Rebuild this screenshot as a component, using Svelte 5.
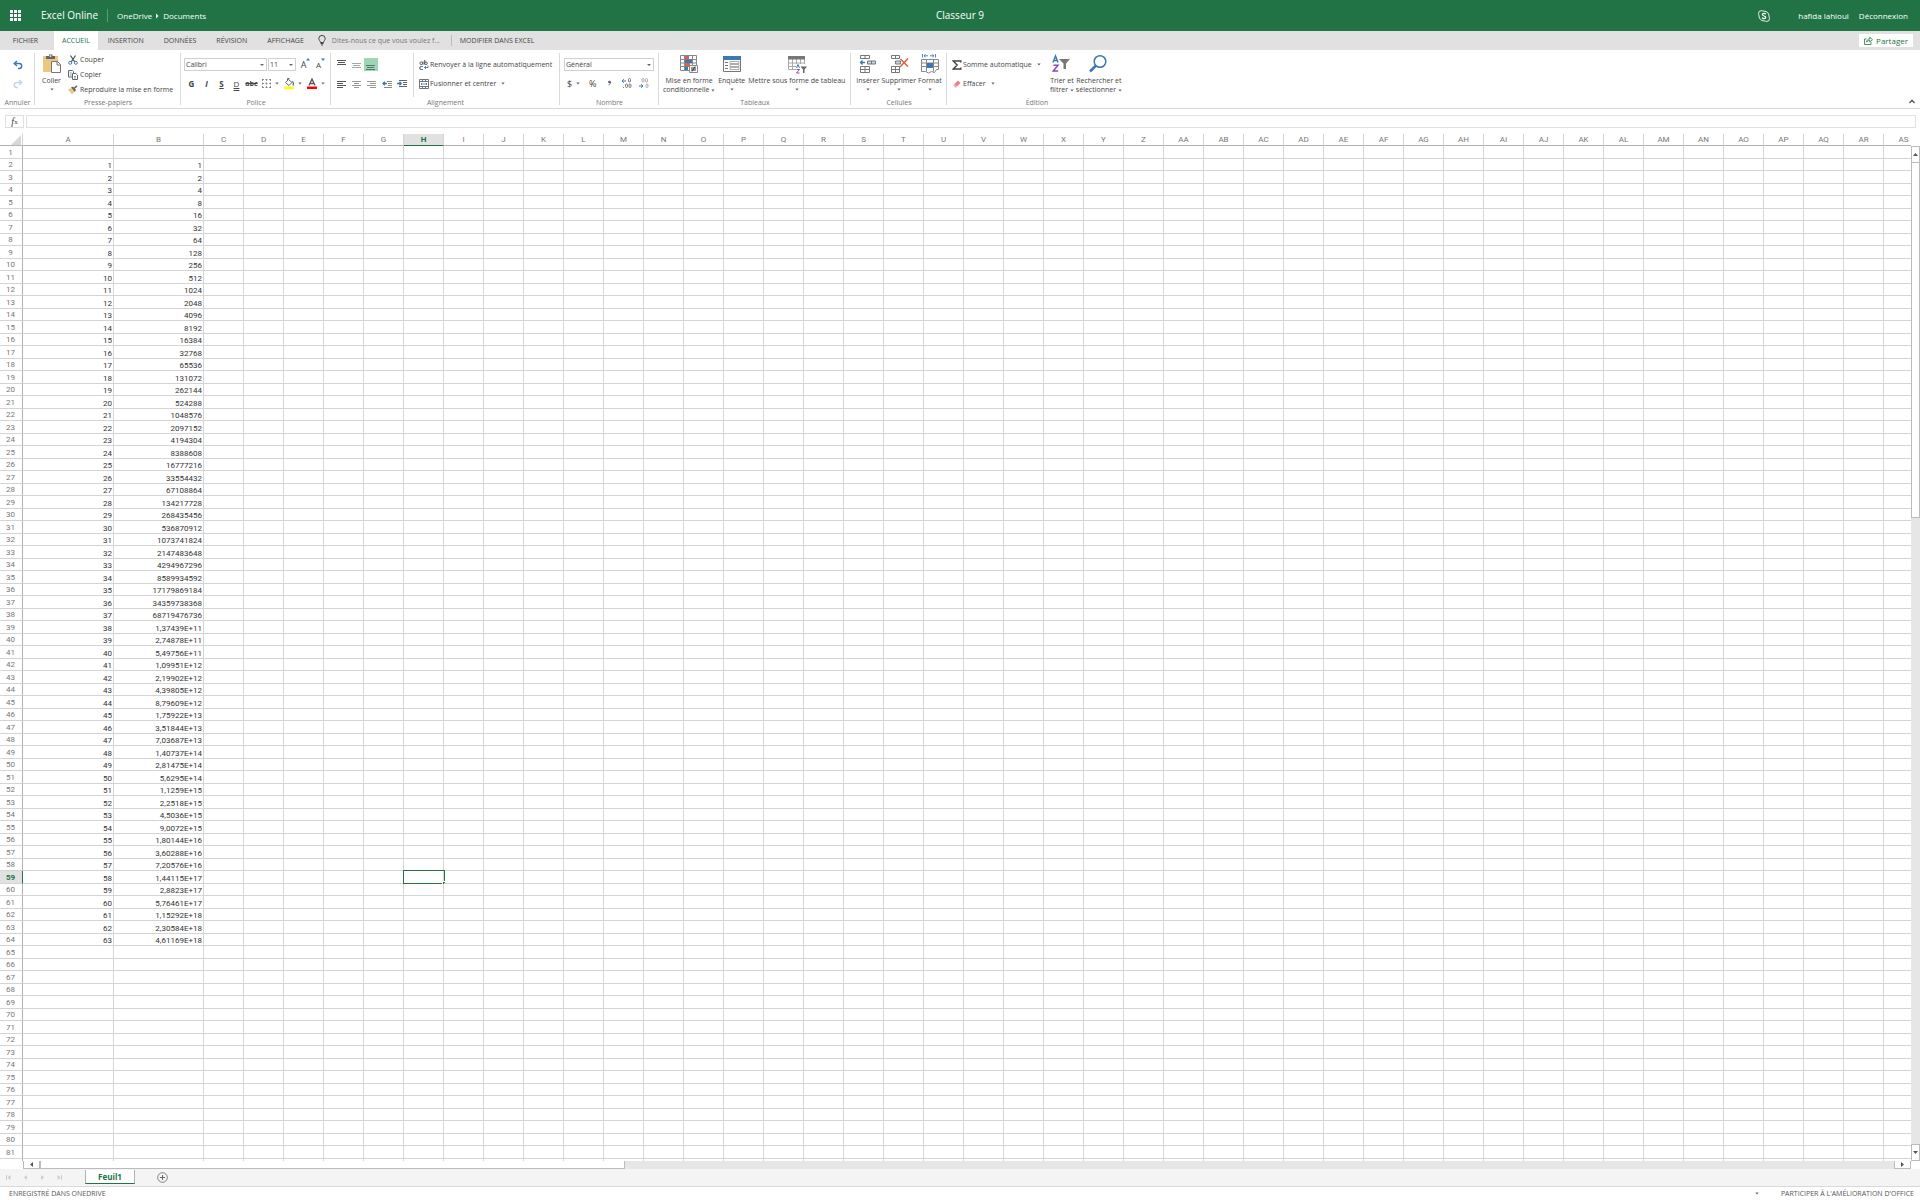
<script>
  const columnName = (i) =>
    i < 26 ? String.fromCharCode(65 + i) : 'A' + String.fromCharCode(65 + i - 26);
  const columns = Array.from({ length: 45 }, (_, i) => columnName(i));

  function formatPower(n) {
    const value = 2 ** n;
    if (value < 1e11) return String(value);
    const [mantissa, exponent] = value.toExponential(5).split('e+');
    return String(Number(mantissa)).replace('.', ',') + 'E+' + exponent;
  }

  const rows = Array.from({ length: 82 }, (_, i) => {
    const filled = i >= 1 && i <= 63;
    return {
      number: i + 1,
      cells: columns.map((_, c) => {
        if (!filled) return '';
        if (c === 0) return String(i);
        if (c === 1) return formatPower(i - 1);
        return '';
      })
    };
  });

  let activeRow = $state(59);
  let activeColumn = $state('H');
  let formula = $state('');
  let question = $state('');
  const tabs = ['INSERTION', 'DONNÉES', 'RÉVISION', 'AFFICHAGE'];
</script>

{#snippet caret()}
  <svg class="caret" width="4" height="3" viewBox="0 0 4 3" aria-hidden="true"><path d="M.3.5h3.400L2 2.500z" fill="#666" /></svg>
{/snippet}

{#snippet lines(widths, color, y)}
  <svg width="10" height="10" viewBox="0 0 10 10" aria-hidden="true">
    {#each widths as w, i}
      <rect x={w[0]} y={y + i * 2} width={w[1]} height="1" fill={color} />
    {/each}
  </svg>
{/snippet}

{#snippet decimals(color, left)}
  <svg width="11" height="11" viewBox="0 0 11 11" fill="none" stroke={color} aria-hidden="true">
    {#if left}
      <path d="M1 3h4M2.800 1.200 1 3l1.800 1.800" stroke="#3b78b5" />
      <rect x="7.500" y=".5" width="2" height="3.500" rx="1" />
      <rect x="4.500" y="6" width="2" height="3.500" rx="1" /><rect x="8" y="6" width="2" height="3.500" rx="1" />
      <path d="M2.500 9v1" />
    {:else}
      <rect x="4" y=".5" width="2" height="3.500" rx="1" /><rect x="7.500" y=".5" width="2" height="3.500" rx="1" />
      <path d="M1 8h4M3.200 6.200 5 8 3.200 9.800" stroke="#3b78b5" />
      <rect x="8" y="6" width="2" height="3.500" rx="1" />
    {/if}
  </svg>
{/snippet}

<div class="app">
  <header class="top">
    <div class="brand">
      <button class="waffle" aria-label="Lanceur d'applications">
        <svg width="12" height="12" viewBox="0 0 12 12" fill="#fff">
          {#each [0, 4, 8] as y}{#each [0, 4, 8] as x}<rect {x} {y} width="3" height="3" />{/each}{/each}
        </svg>
      </button>
      <a class="product" href="#excel">Excel Online</a>
      <nav class="crumbs">
        <a href="#onedrive">OneDrive</a>
        <svg width="3" height="6" viewBox="0 0 3 6"><path d="M0 .5 2.500 3 0 5.500z" fill="#fff" /></svg>
        <a href="#documents">Documents</a>
      </nav>
    </div>
    <h1>Classeur 9</h1>
    <div class="account">
      <button class="skype" aria-label="Skype">
        <svg width="12" height="12" viewBox="0 0 12 12" fill="none" stroke="#fff">
          <path d="M3.200.700c1 0 1.500.4 2.800.4 3 0 5 2.200 5 4.900 0 1 .5 1.800.5 2.700a2.700 2.700 0 0 1-2.700 2.700c-1 0-1.500-.5-2.800-.5-3 0-5-2.200-5-4.900 0-1-.5-1.700-.5-2.600A2.700 2.700 0 0 1 3.200.700z" stroke-width=".9" />
          <path d="M7.800 4.300C7.400 3 4.300 3 4.300 4.600c0 1.700 3.500 1 3.500 2.800 0 1.600-3.300 1.600-3.700.1" stroke-width="1.200" />
        </svg>
      </button>
      <span>hafida lahioul</span>
      <a href="#deconnexion">Déconnexion</a>
    </div>
  </header>

  <div class="tabs">
    <button class="tab file">FICHIER</button>
    <button class="tab active">ACCUEIL</button>
    {#each tabs as tab}
      <button class="tab">{tab}</button>
    {/each}
    <label class="tellme">
      <svg width="8" height="11" viewBox="0 0 8 11" fill="none" stroke="#444">
        <path d="M2.500 7.500C2.500 6 .8 5.500.8 3.600a3.200 3.200 0 0 1 6.400 0C7.200 5.500 5.500 6 5.500 7.500z" />
        <path d="M2.500 8.500h3M3 10h2" />
      </svg>
      <input aria-label="Dites-nous ce que vous voulez faire" placeholder="Dites-nous ce que vous voulez f..." bind:value={question} />
    </label>
    <button class="tab desktop">MODIFIER DANS EXCEL</button>
    <button class="share">
      <svg width="9" height="9" viewBox="0 0 9 9" fill="none" stroke="#217346" stroke-width=".8">
        <path d="M2.500 3H.5v5.500h6.500V6" /><path d="M2.500 6.200C2.800 4 4 3 5.800 3V1.200L8.500 3.700 5.800 6V4.500C4.300 4.500 3.300 5 2.500 6.200z" />
      </svg>
      Partager
    </button>
  </div>

  <div class="ribbon">
    <section class="group undo">
      <div class="rows">
        <div class="row">
          <button aria-label="Annuler">
            <svg width="10" height="10" viewBox="0 0 10 10" fill="none" stroke="#3b78b5" stroke-width="1.400"><path d="M4 1 1.200 3.500 4 6M1.500 3.500h4.700a2.500 2.500 0 0 1 0 5H5" /></svg>
          </button>
        </div>
        <div class="row">
          <button aria-label="Rétablir">
            <svg width="10" height="10" viewBox="0 0 10 10" fill="none" stroke="#c3d5e8" stroke-width="1.400"><path d="M6 1l2.800 2.500L6 6M8.500 3.500H3.800a2.500 2.500 0 0 0 0 5H5" /></svg>
          </button>
        </div>
      </div>
      <h2>Annuler</h2>
    </section>

    <section class="group clipboard">
      <div class="body">
        <button class="big paste">
          <svg width="20" height="20" viewBox="0 0 20 20">
            <rect x="1" y="2" width="15" height="16" fill="#eec77f" />
            <path d="M4 2h3V.5h3.500V2H13v3H4z" fill="#666" /><rect x="7.700" y="1.300" width="1.500" height="1.500" fill="#fff" />
            <path d="M9.500 7.500h6l3 3v8h-9z" fill="#fff" stroke="#777" /><path d="M15 7.500V11h3.500" fill="none" stroke="#777" />
          </svg>
          <span>Coller</span>{@render caret()}
        </button>
        <div class="list">
          <button>
            <svg width="10" height="10" viewBox="0 0 10 10" fill="none"><path d="M2.500.5 6.800 7M7.500.5 3.200 7" stroke="#555" stroke-width="1.300" /><circle cx="2.200" cy="7.800" r="1.500" stroke="#3b78b5" /><circle cx="7.800" cy="7.800" r="1.500" stroke="#3b78b5" /></svg>
            Couper
          </button>
          <button>
            <svg width="10" height="10" viewBox="0 0 10 10" fill="#fff" stroke="#666"><path d="M.5.5h4l1 1V7H.5z" /><path d="M4.500 3.500h3.300l1.700 1.700v4.300h-5z" /><path d="M1.700 3h2M1.700 5h2M6 6.500h2M6 8h2" stroke="#3b78b5" stroke-width=".8" /></svg>
            Copier
          </button>
          <button>
            <svg width="10" height="10" viewBox="0 0 10 10"><path d="M0 4.500 3 3l3.500 3.500L4 9.500z" fill="#eec77f" /><path d="m3 2.500 2-1L8 5 6.800 7z" fill="#666" /><path d="M6 3.500 9 .8" stroke="#666" stroke-width="1.600" /></svg>
            Reproduire la mise en forme
          </button>
        </div>
      </div>
      <h2>Presse-papiers</h2>
    </section>

    <section class="group font">
      <div class="rows">
        <div class="row">
          <span class="select family"><select aria-label="Police"><option>Calibri</option></select></span>
          <span class="select size"><select aria-label="Taille de police"><option>11</option></select></span>
          <button class="tool grow" aria-label="Agrandir la police">A<svg width="4" height="3" viewBox="0 0 4 3"><path d="M0 2.500h4L2 0z" fill="#3b78b5" /></svg></button>
          <button class="tool shrink" aria-label="Réduire la police">A<svg width="4" height="3" viewBox="0 0 4 3"><path d="M0 .5h4L2 3z" fill="#3b78b5" /></svg></button>
        </div>
        <div class="row styles">
          <button class="tool"><b>G</b></button>
          <button class="tool"><b><i>I</i></b></button>
          <button class="tool"><b class="single">S</b></button>
          <button class="tool"><span class="double">D</span></button>
          <button class="tool"><b class="strike">abc</b></button>
          <button class="tool drop" aria-label="Bordures">
            <svg width="9" height="9" viewBox="0 0 9 9" fill="none" stroke="#777"><path d="M0 .5h9M0 4.500h9M0 8.500h9M.5 0v9M4.500 0v9M8.500 0v9" stroke-dasharray="2 1.500" stroke-width=".8" /></svg>{@render caret()}
          </button>
          <button class="tool drop" aria-label="Couleur de remplissage">
            <svg width="10" height="11" viewBox="0 0 10 11"><path d="m1.500 4.500 3-3 3.500 3-3 3z" fill="#fff" stroke="#666" /><path d="M3.500 3V.5h2" fill="none" stroke="#666" /><path d="M8 3.500c1.500.5 1.800 2 1 4" fill="none" stroke="#3b78b5" stroke-width="1.300" /><rect y="8.500" width="10" height="2.500" fill="#ff0" /></svg>{@render caret()}
          </button>
          <button class="tool drop" aria-label="Couleur de police">
            <svg width="10" height="11" viewBox="0 0 10 11"><path d="M2 7.500 5 1l3 6.500M3.200 5.500h3.600" fill="none" stroke="#555" stroke-width="1.300" /><rect y="8.500" width="10" height="2.500" fill="#f00" /></svg>{@render caret()}
          </button>
        </div>
      </div>
      <h2>Police</h2>
    </section>

    <section class="group align">
      <div class="body">
        <div class="rows positions">
          <div class="row">
            <button class="tool" aria-label="Aligner en haut">{@render lines([[0, 9], [1, 7], [0, 9]], '#555', 0)}</button>
            <button class="tool" aria-label="Aligner au centre">{@render lines([[0, 9], [1, 7], [0, 9]], '#aaa', 3)}</button>
            <button class="tool on" aria-label="Aligner en bas">{@render lines([[0, 9], [1, 7], [0, 9]], '#5a7a68', 5)}</button>
          </div>
          <div class="row">
            <button class="tool" aria-label="Aligner à gauche">{@render lines([[0, 9], [0, 6], [0, 9], [0, 6]], '#555', 2)}</button>
            <button class="tool" aria-label="Centrer">{@render lines([[0, 9], [2, 5], [0, 9], [2, 5]], '#999', 2)}</button>
            <button class="tool" aria-label="Aligner à droite">{@render lines([[0, 9], [3, 6], [0, 9], [3, 6]], '#999', 2)}</button>
            <button class="tool" aria-label="Diminuer le retrait">
              <svg width="10" height="10" viewBox="0 0 10 10" fill="none"><path d="M5 2.500h5M6 4.500h4M6 6.500h4M2 8.500h8" stroke="#888" /><path d="M5 4.500H1M2.800 2.700 1 4.500l1.800 1.800" stroke="#3b78b5" stroke-width="1.300" /></svg>
            </button>
            <button class="tool" aria-label="Augmenter le retrait">
              <svg width="10" height="10" viewBox="0 0 10 10" fill="none"><path d="M2 1.500h8M6 3.500h4M6 5.500h4M2 7.500h8" stroke="#666" /><path d="M0 4.500h4M2.500 2.700 4.300 4.500 2.500 6.300" stroke="#3b78b5" stroke-width="1.300" /></svg>
            </button>
          </div>
        </div>
        <div class="rows wrapping">
          <div class="row">
            <button class="label">
              <svg width="10" height="10" viewBox="0 0 10 10" fill="none" stroke="#555"><rect x="1" y="2" width="2.500" height="2.500" rx="1" /><path d="M4 1.500v3.200M5.700 0v4.500" /><rect x="5.700" y="2" width="2.500" height="2.500" rx="1" /><path d="M3.800 6.500H2.200a1.200 1.200 0 0 0 0 3h1.600" /><path d="M9 5.500v2H5.500M7 6 5.500 7.500 7 9" stroke="#3b78b5" stroke-width=".9" /></svg>
              Renvoyer à la ligne automatiquement
            </button>
          </div>
          <div class="row">
            <button class="label">
              <svg width="10" height="10" viewBox="0 0 10 10" fill="none" stroke="#666"><path d="M.5.5h9v9h-9zM.5 2.500h9M.5 7.500h9M3.500.5v2M6.500.5v2M3.500 7.500v2M6.500 7.500v2" stroke-width=".9" /><path d="M2 5h6M3 4 2 5l1 1M7 4l1 1-1 1" stroke="#3b78b5" stroke-width=".8" /></svg>
              Fusionner et centrer {@render caret()}
            </button>
          </div>
        </div>
      </div>
      <h2>Alignement</h2>
    </section>

    <section class="group number">
      <div class="rows">
        <div class="row"><span class="select format"><select aria-label="Format de nombre"><option>Général</option></select></span></div>
        <div class="row spaced">
          <button class="tool drop"><span>$</span>{@render caret()}</button>
          <button class="tool"><span>%</span></button>
          <button class="tool" aria-label="Séparateur de milliers"><svg width="5" height="7" viewBox="0 0 5 7"><circle cx="2.500" cy="2" r="1.300" fill="#555" /><path d="M3.400 2C3.500 3.500 3 4.500 1.500 5" stroke="#555" fill="none" stroke-width=".8" /></svg></button>
          <button class="tool" aria-label="Ajouter une décimale">{@render decimals('#777', true)}</button>
          <button class="tool" aria-label="Réduire les décimales">{@render decimals('#aaa', false)}</button>
        </div>
      </div>
      <h2>Nombre</h2>
    </section>

    <section class="group tables">
      <div class="body">
        <button class="big cond">
          <svg width="20" height="20" viewBox="0 0 20 20" fill="none"><path d="M1.500 1.500h16v15h-16zM1.500 5.500h16M1.500 9h16M1.500 12.500h16M5.500 1.500v15M13.500 1.500v15" stroke="#888" /><path d="M6 2h4v3.500H6zM6 9h5v3.500H6z" fill="#e0603a" /><path d="M6 5.500h7V9H6zM6 12.500h3V16H6z" fill="#3b78b5" /><path d="M10.500 11.500h8v7h-8z" fill="#fff" stroke="#888" /><path d="M12 14h5M12 16h5M16 12.500l-3 5" stroke="#333" /></svg>
          <span>Mise en forme<br />conditionnelle {@render caret()}</span>
        </button>
        <button class="big">
          <svg width="20" height="20" viewBox="0 0 20 20" fill="none"><path d="M1.500 2.500h17v15h-17z" fill="#fff" stroke="#777" /><path d="M1 2h18v4H1z" fill="#3b78b5" /><path d="M3 8.500h3M3 11.500h3M3 14.500h3" stroke="#777" /><path d="M8 7.500h9v2H8zM8 10.500h9v2H8zM8 13.500h9v2H8z" stroke="#999" stroke-width=".8" /></svg>
          <span>Enquête</span>{@render caret()}
        </button>
        <button class="big">
          <svg width="20" height="20" viewBox="0 0 20 20" fill="none"><path d="M1.500 2.500h16v13h-16zM1.500 9h16M1.500 12.500h16M5.500 5v10.500M9.500 5v10.500M13.500 5v10.500" stroke="#aaa" /><path d="M1 2h17v3.500H1z" fill="#777" /><path d="M9 10h11v9H9z" fill="#fff" /><path d="m9.500 14 1.500-3.500 1.500 3.500" stroke="#3b78b5" /><path d="M9.500 15.500h3l-3 3.500h3" stroke="#8a4bb0" /><path d="M13.500 12.500H20l-2.500 3V19h-1.500v-3.500z" fill="#666" /></svg>
          <span>Mettre sous forme de tableau</span>{@render caret()}
        </button>
      </div>
      <h2>Tableaux</h2>
    </section>

    <section class="group cells">
      <div class="body">
        <button class="big">
          <svg width="20" height="20" viewBox="0 0 20 20" fill="none" stroke="#777"><path d="M2.500 1.500h9v3h-9zM7 1.500v3M2.500 12.500h9v6h-9zM7 12.500v6M2.500 15.500h9" /><path d="M9.500 7h8v3h-8zM13.500 7v3" fill="#c6d7ea" /><path d="M7 8.500H2.500M4.500 6.500l-2 2 2 2" stroke="#3b78b5" stroke-width="1.300" /></svg>
          <span>Insérer</span>{@render caret()}
        </button>
        <button class="big">
          <svg width="20" height="20" viewBox="0 0 20 20" fill="none" stroke="#777"><path d="M2.500 1.500h8v3h-8zM6.500 1.500v3M2.500 12.500h8v6h-8zM6.500 12.500v6M2.500 15.500h8" /><path d="M6.500 7h5v3h-5z" fill="#c6d7ea" /><path d="m11.500 5 7.500 7.500M19 4.500 11 13" stroke="#e0603a" stroke-width="1.500" /></svg>
          <span>Supprimer</span>{@render caret()}
        </button>
        <button class="big">
          <svg width="20" height="20" viewBox="0 0 20 20" fill="none" stroke="#888"><path d="M1.500 5.500h17v10h-2l-2 3-3-1-3 1.500-3-1.500H1.500zM1.500 9h17M1.500 12.500h17M6.500 5.500v12M13.500 5.500v12" /><path d="M7 9h6v5H7z" fill="#3b78b5" stroke="none" /><path d="M2.500 0v3.500M15.500 0v3.500M4 1.800h4M10 1.800h4M5.500.5 4 1.800l1.500 1.300M12.500.5 14 1.800l-1.500 1.300" stroke="#3b78b5" stroke-width=".9" /></svg>
          <span>Format</span>{@render caret()}
        </button>
      </div>
      <h2>Cellules</h2>
    </section>

    <section class="group edit">
      <div class="body">
        <div class="rows totals">
          <div class="row">
            <button class="label"><svg width="10" height="10" viewBox="0 0 10 10" fill="none" stroke="#444" stroke-width="1.400"><path d="M8.800 2.500V1H1.200l4 4-4 4h7.600V7.500" /></svg>Somme automatique {@render caret()}</button>
          </div>
          <div class="row">
            <button class="label"><svg width="10" height="10" viewBox="0 0 10 10"><path d="M1.500 6 6 1.500 8.500 4 4 8.500z" fill="#e97f8e" /><path d="m1.500 6 1-1L5 7.500l-1 1-1.800-.2z" fill="#f6b8c0" /></svg>Effacer {@render caret()}</button>
          </div>
        </div>
        <button class="big sort">
          <svg width="20" height="20" viewBox="0 0 20 20" fill="none" stroke-width="1.500"><path d="M1 8.500 3.500 2 6 8.500M2 6.500h3" stroke="#3b78b5" /><path d="M1.500 11.200h4.500L1.200 17h5" stroke="#8a4bb0" /><path d="M7 5h11l-4 4.500V15h-2.500V9.500z" fill="#777" /></svg>
          <span>Trier et<br />filtrer {@render caret()}</span>
        </button>
        <button class="big">
          <svg width="20" height="20" viewBox="0 0 20 20" fill="none" stroke="#3b78b5"><circle cx="11" cy="7.500" r="5.800" stroke-width="1.500" /><path d="M6.800 11.800 1 17.500" stroke-width="2.600" /></svg>
          <span>Rechercher et<br />sélectionner {@render caret()}</span>
        </button>
      </div>
      <h2>Édition</h2>
    </section>

    <button class="collapse" aria-label="Réduire le ruban">
      <svg width="6" height="5" viewBox="0 0 6 5" fill="none" stroke="#555" stroke-width="1.300"><path d="M.5 4 3 1.200 5.500 4" /></svg>
    </button>
  </div>

  <div class="formula">
    <button class="fx" aria-label="Insérer une fonction"><i>f</i><small>x</small></button>
    <input aria-label="Barre de formule" bind:value={formula} />
  </div>

  <div class="workspace">
    <div class="sheet">
      <table>
        <colgroup>
          <col class="c-head" /><col class="c-a" /><col class="c-b" />
          {#each columns.slice(2) as _}<col class="c-std" />{/each}
        </colgroup>
        <thead>
          <tr>
            <th class="corner" aria-label="Tout sélectionner"><svg width="10" height="10" viewBox="0 0 10 10"><path d="M10 0v10H0z" fill="#d9d9d9" /></svg></th>
            {#each columns as name}
              <th scope="col" class:current={name === activeColumn}>{name}</th>
            {/each}
          </tr>
        </thead>
        <tbody>
          {#each rows as row}
            <tr>
              <th scope="row" class:current={row.number === activeRow}>{row.number < rows.length ? row.number : ''}</th>
              {#each row.cells as cell, c}
                <td
                  class:selected={row.number === activeRow && columns[c] === activeColumn}
                  onclick={() => { activeRow = row.number; activeColumn = columns[c]; }}
                >{cell}</td>
              {/each}
            </tr>
          {/each}
        </tbody>
      </table>
    </div>
    <div class="vscroll">
      <button aria-label="Défiler vers le haut"><svg width="5" height="3" viewBox="0 0 5 3"><path d="M0 3h5L2.500 0z" fill="#555" /></svg></button>
      <div class="vthumb"></div>
      <div class="track"></div>
      <button aria-label="Défiler vers le bas"><svg width="5" height="3" viewBox="0 0 5 3"><path d="M0 0h5L2.500 3z" fill="#555" /></svg></button>
    </div>
  </div>

  <div class="hscroll">
    <button aria-label="Défiler à gauche"><svg width="3" height="5" viewBox="0 0 3 5"><path d="M3 0v5L0 2.500z" fill="#555" /></svg></button>
    <div class="hthumb"></div>
    <div class="track"></div>
    <button class="end" aria-label="Défiler à droite"><svg width="3" height="5" viewBox="0 0 3 5"><path d="M0 0v5l3-2.500z" fill="#555" /></svg></button>
  </div>

  <div class="sheets">
    <div class="moves">
      <button aria-label="Première feuille"><svg width="5" height="5" viewBox="0 0 5 5" fill="#ccc"><path d="M0 0h1v5H0zM4.500 0v5L1.500 2.500z" /></svg></button>
      <button aria-label="Feuille précédente"><svg width="5" height="5" viewBox="0 0 5 5" fill="#ccc"><path d="M4 0v5L1 2.500z" /></svg></button>
      <button aria-label="Feuille suivante"><svg width="5" height="5" viewBox="0 0 5 5" fill="#ccc"><path d="M1 0v5l3-2.500z" /></svg></button>
      <button aria-label="Dernière feuille"><svg width="5" height="5" viewBox="0 0 5 5" fill="#ccc"><path d="M4 0h1v5H4zM.5 0v5l3-2.500z" /></svg></button>
    </div>
    <button class="sheet-tab">Feuil1</button>
    <button class="add" aria-label="Nouvelle feuille"><svg width="11" height="11" viewBox="0 0 11 11" fill="none" stroke="#666"><circle cx="5.500" cy="5.500" r="4.800" stroke-width=".8" /><path d="M5.500 3v5M3 5.500h5" /></svg></button>
  </div>

  <footer>
    <span>ENREGISTRÉ DANS ONEDRIVE</span>
    <button class="more" aria-label="Options">{@render caret()}</button>
    <a href="#commentaires">PARTICIPER À L'AMÉLIORATION D'OFFICE</a>
  </footer>
</div>

<style>
  :global(body) { margin: 0; background: #fff; }

  .app {
    display: flex;
    flex-direction: column;
    height: 100vh;
    overflow: hidden;
    font: 7px/9px "Open Sans", "Noto Sans", sans-serif;
    color: #444;
  }
  button, input, select { font: inherit; color: inherit; margin: 0; padding: 0; border: 0; background: none; border-radius: 0; outline: 0; }
  button { display: flex; align-items: center; justify-content: center; white-space: nowrap; cursor: pointer; }
  a { color: inherit; text-decoration: none; }
  svg { display: block; flex: none; }
  h1, h2 { margin: 0; font-weight: 400; }

  .top {
    display: grid;
    grid-template-columns: 1fr auto 1fr;
    align-items: center;
    height: 31px;
    flex: none;
    background: #217346;
    color: #fff;
    line-height: 13px;
  }
  .brand, .crumbs, .account { display: flex; align-items: center; }
  .waffle { width: 31px; height: 31px; }
  .product { margin-left: 10px; font-size: 10px; padding-right: 9px; border-right: 1px solid #5c9a79; }
  .crumbs { gap: 4px; margin-left: 9px; font-size: 8px; }
  h1 { font-size: 10px; }
  .account { justify-content: flex-end; gap: 10px; padding-right: 12px; font-size: 8px; }
  .skype { margin-right: 18px; }

  .tabs { display: flex; height: 19px; flex: none; background: #e1e1e1; }
  .tab { padding: 0 10px; }
  .file { width: 54px; padding-right: 13px; }
  .active { padding: 0 8px; background: #fff; color: #217346; }
  .tellme { display: flex; align-items: center; gap: 6px; margin-left: 4px; }
  .tellme input { width: 119px; height: 11px; border-right: 1px solid #bbb; }
  .tellme input::placeholder { color: #777; opacity: 1; }
  .desktop { padding: 0 8px; }
  .share { gap: 3px; height: 13px; margin: 3px 7px 3px auto; padding: 0 5px; background: #fff; color: #217346; font-size: 8px; }

  .ribbon { position: relative; display: flex; height: 58px; flex: none; border-bottom: 1px solid #d9d9d9; }
  .group { position: relative; display: flex; flex-direction: column; flex: none; box-sizing: border-box; padding-top: 3px; }
  .group::after { content: ""; position: absolute; right: 0; top: 3px; bottom: 3px; width: 1px; background: #d9d9d9; }
  .group.edit::after { display: none; }
  .group h2 { font-size: 7px; line-height: 8px; color: #777; text-align: center; margin-top: auto; padding-bottom: 1px; }
  .undo { width: 35px; }
  .clipboard { width: 146px; }
  .font { width: 150px; }
  .align { width: 229px; }
  .number { width: 99px; }
  .tables { width: 192px; }
  .cells { width: 96px; }
  .edit { width: 180px; }

  .body { display: flex; }
  .rows { display: flex; flex-direction: column; gap: 6px; padding-top: 5px; }
  .row { display: flex; align-items: center; height: 13px; }
  .undo .row { justify-content: center; }
  .font .rows { padding-left: 3px; }
  .number .rows { padding-left: 4px; }

  .big { flex-direction: column; justify-content: flex-start; padding: 1px 1px 0; line-height: 9px; }
  .big > span { margin-top: 2px; }
  .big > .caret { margin-top: 3px; }
  span > .caret { display: inline-block; vertical-align: middle; }
  .paste { width: 33px; }
  .list { display: flex; flex-direction: column; margin-top: -1px; }
  .list button { justify-content: flex-start; gap: 2px; height: 15px; }
  .label { gap: 1px; }
  .label .caret { margin-left: 4px; }

  .tool { width: 15px; height: 13px; font-size: 8px; }
  .drop { width: auto; gap: 4px; padding: 0 3px; }
  .styles .drop { padding: 0 2px 0 3px; }
  .on { background: #9fd5b7; width: 14px; }
  .single { text-decoration: underline; }
  .double { text-decoration: underline double; }
  .strike { text-decoration: line-through; font-size: 7px; }
  .grow, .shrink { align-items: flex-start; font-size: 9px; line-height: 13px; }
  .shrink { font-size: 8px; }
  .grow { margin-left: 2px; }

  .select { position: relative; display: flex; height: 13px; }
  .select select { appearance: none; width: 100%; box-sizing: border-box; border: 1px solid #d0d0d0; background: #fff; padding-left: 1px; }
  .select::after { content: ""; position: absolute; right: 3px; top: 6px; border: 2px solid transparent; border-top-color: #666; border-bottom: 0; pointer-events: none; }
  .family { width: 83px; margin-right: 1px; }
  .size { width: 28px; }
  .format { width: 90px; }

  .positions { padding-left: 3px; padding-right: 4px; height: 39px; border-right: 1px solid #d9d9d9; }
  .wrapping { padding-left: 5px; }
  .spaced { gap: 2px; }
  .spaced .tool { font-size: 9px; }
  .cond { margin-left: 3px; }
  .tables .body { gap: 1px; }
  .cells .body { justify-content: center; }
  .totals { width: 97px; padding-left: 5px; }
  .collapse { position: absolute; right: 5px; bottom: 4px; }

  .formula { display: flex; gap: 2px; flex: none; height: 13px; padding: 6px 4px 6px 5px; }
  .fx { width: 19px; box-sizing: border-box; border: 1px solid #e0e0e0; font: 10px/10px "Liberation Serif", serif; }
  .fx small { font-size: 7px; }
  .formula input { flex: 1; min-width: 0; box-sizing: border-box; border: 1px solid #e0e0e0; padding: 0 3px; }

  .workspace { display: flex; flex: 1; min-height: 0; }
  .sheet { flex: 1; min-width: 0; overflow: hidden; }
  table { border-collapse: separate; border-spacing: 0; table-layout: fixed; width: 1924px; font: 8px/9px Roboto, "Open Sans", sans-serif; }
  .c-head { width: 23px; }
  .c-a { width: 91px; }
  .c-b { width: 90px; }
  .c-std { width: 40px; }
  th, td { padding: 0; box-sizing: border-box; border: 0 solid #d4d4d4; border-width: 0 1px 1px 0; overflow: hidden; white-space: nowrap; }
  thead tr { height: 12px; }
  thead th { font-weight: 400; color: #777; border-bottom-color: #b1b1b1; }
  .corner svg { margin: 0 1px 0 auto; }
  tbody tr { height: 12px; }
  tbody tr:nth-child(odd) { height: 13px; }
  tbody th { font-weight: 400; color: #777; text-align: center; padding-right: 1px; border-right-color: #b1b1b1; }
  td { text-align: right; vertical-align: bottom; padding-right: 1px; color: #333; position: relative; }
  thead .current { background: #e1e1e1; color: #217346; font-weight: 700; border-bottom-color: #217346; }
  tbody .current { background: #e1e1e1; color: #217346; font-weight: 700; border-right-color: #217346; }
  .selected { overflow: visible; }
  .selected::before { content: ""; position: absolute; inset: -1px -2px -1px -1px; border: 1px solid #217346; }
  .selected::after { content: ""; position: absolute; right: -2px; bottom: -1px; width: 2px; height: 2px; background: #217346; border: 1px solid #fff; border-width: 1px 0 0 1px; }

  .vscroll { display: flex; flex-direction: column; width: 9px; flex: none; margin-top: 12px; }
  .vscroll button { height: 17px; flex: none; border: 1px solid #b9bcbb; background: #fff; }
  .vthumb { flex: 0 0 35%; border: 1px solid #b9bcbb; border-top: 0; box-sizing: border-box; }
  .track { flex: 1; background: #e6e6e6; }
  .hscroll { display: flex; flex: none; height: 8px; padding: 0 9px 0 23px; }
  .hscroll button, .hthumb { box-sizing: border-box; border: 1px solid #b9bcbb; border-top: 0; background: #fff; }
  .hscroll button { width: 17px; flex: none; }
  .hthumb { flex: 0 0 31%; }

  .sheets { display: flex; align-items: flex-start; flex: none; height: 17px; background: #f4f4f4; border-bottom: 1px solid #d9d9d9; }
  .moves { display: flex; width: 85px; height: 17px; }
  .moves button { width: 17px; }
  .sheet-tab { width: 50px; height: 14px; margin-top: 1px; box-sizing: border-box; border: 1px solid #b1b1b1; border-top: 0; border-bottom: 1px solid #217346; background: #fff; color: #217346; font-weight: 700; font-size: 8px; }
  .add { margin: 3px 0 0 22px; }

  footer { display: flex; align-items: center; flex: none; height: 13px; padding: 0 6px 0 9px; font-size: 7px; color: #555; }
  .more { margin-left: auto; margin-right: 22px; }
</style>
